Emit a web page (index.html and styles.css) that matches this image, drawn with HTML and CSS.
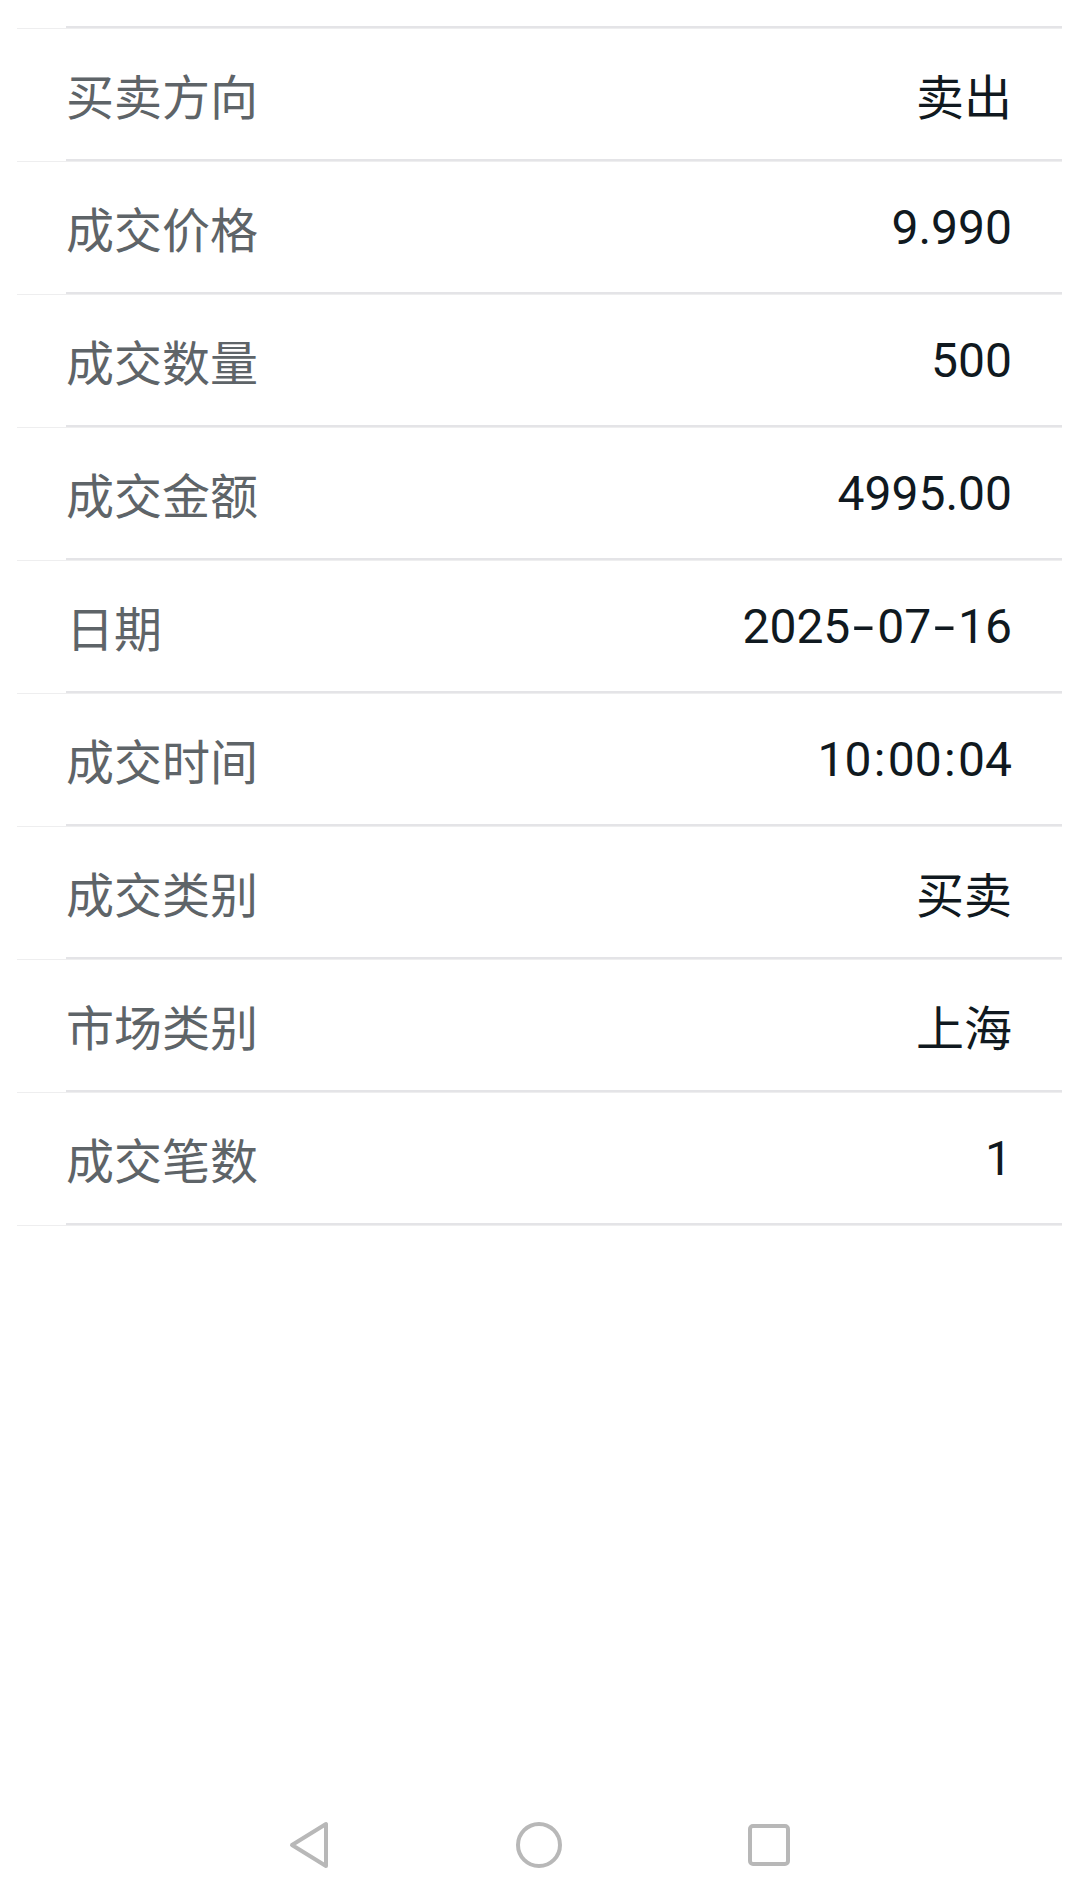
FILE: index.html
```html
<!DOCTYPE html>
<html lang="zh-CN">
<head>
  <meta charset="UTF-8">
  <meta name="viewport" content="width=device-width, initial-scale=1.0">
  <title>成交详情</title>
  <link rel="stylesheet" href="styles.css">
</head>
<body>
  <div class="page">
    <div class="list">
      <div class="row row-top"><div class="row-body"></div></div>
      <div class="row"><div class="row-body"><span class="label">买卖方向</span><span class="value">卖出</span></div></div>
      <div class="row"><div class="row-body"><span class="label">成交价格</span><span class="value">9.990</span></div></div>
      <div class="row"><div class="row-body"><span class="label">成交数量</span><span class="value">500</span></div></div>
      <div class="row"><div class="row-body"><span class="label">成交金额</span><span class="value">4995.00</span></div></div>
      <div class="row"><div class="row-body"><span class="label">日期</span><span class="value">2025<span class="dash">-</span>07<span class="dash">-</span>16</span></div></div>
      <div class="row"><div class="row-body"><span class="label">成交时间</span><span class="value">10<span class="colon">:</span>00<span class="colon">:</span>04</span></div></div>
      <div class="row"><div class="row-body"><span class="label">成交类别</span><span class="value">买卖</span></div></div>
      <div class="row"><div class="row-body"><span class="label">市场类别</span><span class="value">上海</span></div></div>
      <div class="row"><div class="row-body"><span class="label">成交笔数</span><span class="value">1</span></div></div>
    </div>

    <div class="navbar">
      <div class="nav-btn">
        <svg viewBox="0 0 60 60" width="60" height="60"><polygon points="13,30 47,9 47,51" /></svg>
      </div>
      <div class="nav-btn">
        <svg viewBox="0 0 60 60" width="60" height="60"><circle cx="30" cy="30" r="21" /></svg>
      </div>
      <div class="nav-btn">
        <svg viewBox="0 0 60 60" width="60" height="60"><rect x="11" y="11" width="38" height="38" rx="3" /></svg>
      </div>
    </div>
  </div>
</body>
</html>
```

FILE: styles.css
```css
body {
  margin: 0;
  padding: 0;
  background: #fff;
  font-family: Roboto, "Noto Sans CJK SC", sans-serif;
}
.page {
  min-height: 100vh;
  display: flex;
  flex-direction: column;
}
.list {
  flex: 1;
}
.row {
  margin: 0 17px;
  border-bottom: 1px solid #eeeeef;
}
.row-body {
  margin-left: 49px;
  height: 130px;
  padding-right: 50px;
  border-bottom: 2px solid #e4e4e7;
  display: flex;
  align-items: center;
  justify-content: space-between;
}
.row-top .row-body {
  height: 26px;
}
.label {
  font-family: "Noto Sans CJK SC", sans-serif;
  font-size: 48px;
  color: #5e6468;
}
.value {
  font-size: 48px;
  color: #101920;
}
.dash {
  display: inline-block;
  width: 0.56em;
  text-align: center;
  transform: scaleX(1.6);
}
.colon {
  display: inline-block;
  width: 0.34em;
  text-align: center;
}
.navbar {
  height: 114px;
  display: flex;
  align-items: center;
  gap: 170px;
  padding-left: 279px;
}
.nav-btn svg {
  display: block;
  fill: none;
  stroke: #b8b8b8;
  stroke-width: 4;
  stroke-linejoin: round;
}
```
